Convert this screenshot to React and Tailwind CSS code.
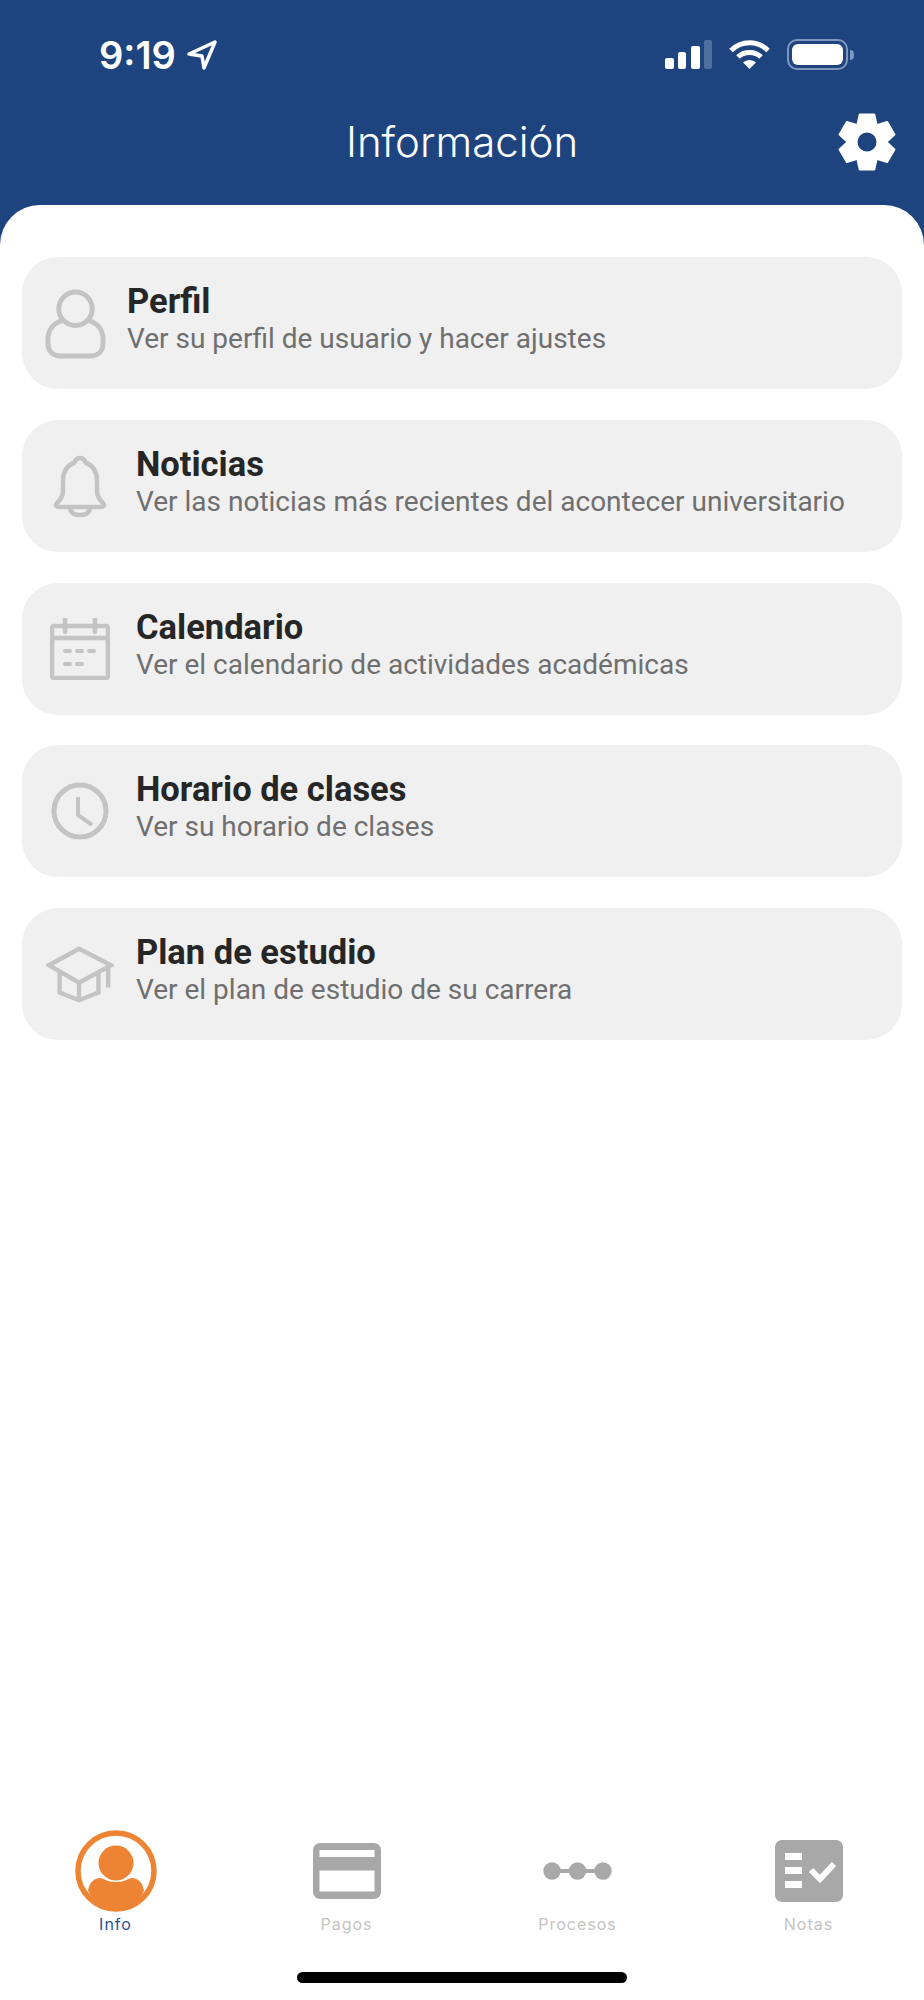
import React from "react";

const GRAY = "#c4c4c4";

function ProfileIcon() {
  return (
    <svg width="61" height="71" viewBox="0 0 62 72" fill="none" stroke={GRAY} strokeWidth="5">
      <circle cx="31" cy="21" r="17" />
      <path d="M17 33C8 36 3 43 3 52v4c0 8 5 13 13 13h30c8 0 13-5 13-13v-4c0-9-5-16-14-19" strokeLinecap="round" />
    </svg>
  );
}

function BellIcon() {
  return (
    <svg width="54" height="62" viewBox="0 0 54 62" fill="none" stroke={GRAY} strokeWidth="4.5" strokeLinejoin="round">
      <path d="M27 3c4 0 5 3 6 5 7 2 11 9 11 17v11c0 6 3 9 6 12 2 2 1 4-2 4H6c-3 0-4-2-2-4 3-3 6-6 6-12V25c0-8 4-15 11-17 1-2 2-5 6-5z" />
      <path d="M17 52c0 6 4 8 10 8s10-2 10-8" />
    </svg>
  );
}

function CalendarIcon() {
  return (
    <svg width="60" height="62" viewBox="0 0 60 62" fill="none" stroke={GRAY} strokeWidth="4.5">
      <rect x="2" y="8" width="56" height="52" rx="2" />
      <path d="M2 20h56" />
      <path d="M15 1v13M45 1v13" strokeLinecap="round" />
      <path d="M15 33h5M27 33h5M39 33h5M15 46h5M27 46h5" strokeLinecap="round" strokeWidth="4" />
    </svg>
  );
}

function ClockIcon() {
  return (
    <svg width="58" height="58" viewBox="0 0 58 58" fill="none" stroke={GRAY} strokeWidth="5">
      <circle cx="29" cy="29" r="26" />
      <path d="M27 15v18l14 10" strokeWidth="4" />
    </svg>
  );
}

function CapIcon() {
  return (
    <svg width="68" height="58" viewBox="0 0 70 58" fill="none" stroke={GRAY} strokeWidth="4.5" strokeLinejoin="miter">
      <path d="M34 3 3 20l31 18 33-18z" />
      <path d="M14 27v21l20 8 20-8V28M34 38v18M64 22v21" />
    </svg>
  );
}

// Six flat teeth around a ring, the settings button in the header
function GearIcon() {
  const angles = [0, 60, 120, 180, 240, 300];
  return (
    <svg width="58" height="58" viewBox="-29 -29 58 58">
      <circle r="14.500" fill="none" stroke="#fff" strokeWidth="10" />
      {angles.map((a) => (
        <path
          key={a}
          d="M-9.500-17.500-7.300-27.500H7.300L9.500-17.500z"
          fill="#fff"
          stroke="#fff"
          strokeWidth="2"
          strokeLinejoin="round"
          transform={`rotate(${a})`}
        />
      ))}
    </svg>
  );
}

function StatusIcons() {
  return (
    <div className="flex items-start">
      <div className="flex items-end gap-[4.500px] h-[30px]">
        <span className="block w-[9px] h-[11px] rounded-[2px] bg-white" />
        <span className="block w-[8px] h-[17px] rounded-[2px] bg-white" />
        <span className="block w-[9px] h-[23px] rounded-[2px] bg-white" />
        <span className="block w-[8px] h-[29px] rounded-[2px] bg-[#4f6f9f]" />
      </div>
      <svg className="ml-[17px]" width="41" height="30" viewBox="0 0 41 30">
        <path d="M2 11.500C12 1 29 1 39 11.500" fill="none" stroke="#fff" strokeWidth="5" />
        <path d="M9 18C15 12 26 12 32 18" fill="none" stroke="#fff" strokeWidth="5" />
        <path d="M14 23.500c4-3.500 9-3.500 13 0L20.500 30z" fill="#fff" />
      </svg>
      <div className="ml-[17px] flex items-center">
        <div className="w-[61px] h-[31px] rounded-[10px] border-[2px] border-[#7f97bc] p-[3px]">
          <div className="w-full h-full rounded-[6px] bg-white" />
        </div>
        <div className="ml-[2px] w-[4px] h-[10px] rounded-r-[4px] bg-[#7f97bc]" />
      </div>
    </div>
  );
}

const rows = [
  { title: "Perfil", text: "Ver su perfil de usuario y hacer ajustes", Icon: ProfileIcon, slot: "w-[105px]" },
  { title: "Noticias", text: "Ver las noticias más recientes del acontecer universitario", Icon: BellIcon, slot: "w-[114px]" },
  { title: "Calendario", text: "Ver el calendario de actividades académicas", Icon: CalendarIcon, slot: "w-[114px]" },
  { title: "Horario de clases", text: "Ver su horario de clases", Icon: ClockIcon, slot: "w-[114px]" },
  { title: "Plan de estudio", text: "Ver el plan de estudio de su carrera", Icon: CapIcon, slot: "w-[114px]" },
];

function InfoIcon() {
  return (
    <svg width="82" height="82" viewBox="0 0 82 82">
      <circle cx="41" cy="41" r="38" fill="#fff" stroke="#ed8433" strokeWidth="5.500" />
      <circle cx="41" cy="33" r="17.500" fill="#ed8433" />
      <path d="M13 61c1-8 6-13 12-13 4 0 6 4 16 4s12-4 16-4c6 0 11 5 12 13-6 12-17 19-28 19s-22-7-28-19z" fill="#ed8433" />
    </svg>
  );
}

function PagosIcon() {
  return (
    <svg width="68" height="56" viewBox="0 0 68 56">
      <rect width="68" height="56" rx="7" fill="#a8a8a8" />
      <rect x="6.500" y="7" width="55" height="7" fill="#fff" />
      <rect x="6.500" y="27.500" width="55" height="21" fill="#fff" />
    </svg>
  );
}

function ProcesosIcon() {
  return (
    <svg width="69" height="18" viewBox="0 0 69 18" fill="#a8a8a8">
      <circle cx="9" cy="9" r="8.700" />
      <circle cx="34.500" cy="9" r="8.700" />
      <circle cx="60" cy="9" r="8.700" />
      <rect x="9" y="7" width="51" height="4" />
    </svg>
  );
}

function NotasIcon() {
  return (
    <svg width="68" height="62" viewBox="0 0 68 62">
      <rect width="68" height="62" rx="7" fill="#a8a8a8" />
      <path d="M10 13h17v7H10zM10 27h17v7H10zM10 41h17v7H10z" fill="#fff" />
      <path d="M36 30l9 9 14-15" fill="none" stroke="#fff" strokeWidth="6" />
    </svg>
  );
}

const tabs = [
  { label: "Info", Icon: InfoIcon, color: "text-[#2a5290]" },
  { label: "Pagos", Icon: PagosIcon, color: "text-[#c4c4c4]" },
  { label: "Procesos", Icon: ProcesosIcon, color: "text-[#c4c4c4]" },
  { label: "Notas", Icon: NotasIcon, color: "text-[#c4c4c4]" },
];

export default function App() {
  return (
    <div className="w-[924px] h-[2000px] flex flex-col bg-[#1e4480] font-['Roboto',sans-serif]">
      <header className="h-[205px] shrink-0 pt-[39px] text-white">
        <div className="flex items-start justify-between pl-[99px] pr-[70px] h-[32px]">
          <div className="flex items-center gap-[11px]">
            <span className="font-['Inter',sans-serif] font-semibold text-[38px] leading-[32px]">9:19</span>
            <svg width="30" height="30" viewBox="0 0 30 30" fill="none" stroke="#fff" strokeWidth="3.500" strokeLinejoin="round">
              <path d="M2 14 28 2 17 28l-2-12z" />
            </svg>
          </div>
          <StatusIcons />
        </div>
        <div className="grid grid-cols-[1fr_auto_1fr] items-center h-[70px] mt-[36px]">
          <div />
          <h1 className="font-['Inter',sans-serif] font-light text-[42px] leading-[60px]">Información</h1>
          <div className="flex justify-end pr-[28px]">
            <GearIcon />
          </div>
        </div>
      </header>

      <main className="flex-1 flex flex-col bg-white rounded-t-[40px]">
        <div className="flex-1 flex flex-col gap-[30.750px] px-[22px] pt-[52px]">
          {rows.map(({ title, text, Icon, slot }) => (
            <div key={title} className="h-[132px] flex items-center rounded-[36px] bg-[#f0f0f0]">
              <div className={`${slot} shrink-0 flex justify-center pl-[2px]`}>
                <Icon />
              </div>
              <div className="pb-[6px]">
                <div className="text-[34.500px] leading-[37px] font-bold text-[#262626]">{title}</div>
                <div className="text-[28px] leading-[37px] text-[#6f6f6f]">{text}</div>
              </div>
            </div>
          ))}
        </div>

        <nav className="grid grid-cols-4 font-['Inter',sans-serif]">
          {tabs.map(({ label, Icon, color }) => (
            <div key={label} className="flex flex-col items-center">
              <div className="h-[82px] flex items-center justify-center">
                <Icon />
              </div>
              <span className={`text-[16px] leading-[24px] tracking-[1px] ${color}`}>{label}</span>
            </div>
          ))}
        </nav>
        <div className="h-[64px] flex items-start justify-center pt-[36px]">
          <div className="w-[330px] h-[11px] rounded-full bg-black" />
        </div>
      </main>
    </div>
  );
}
